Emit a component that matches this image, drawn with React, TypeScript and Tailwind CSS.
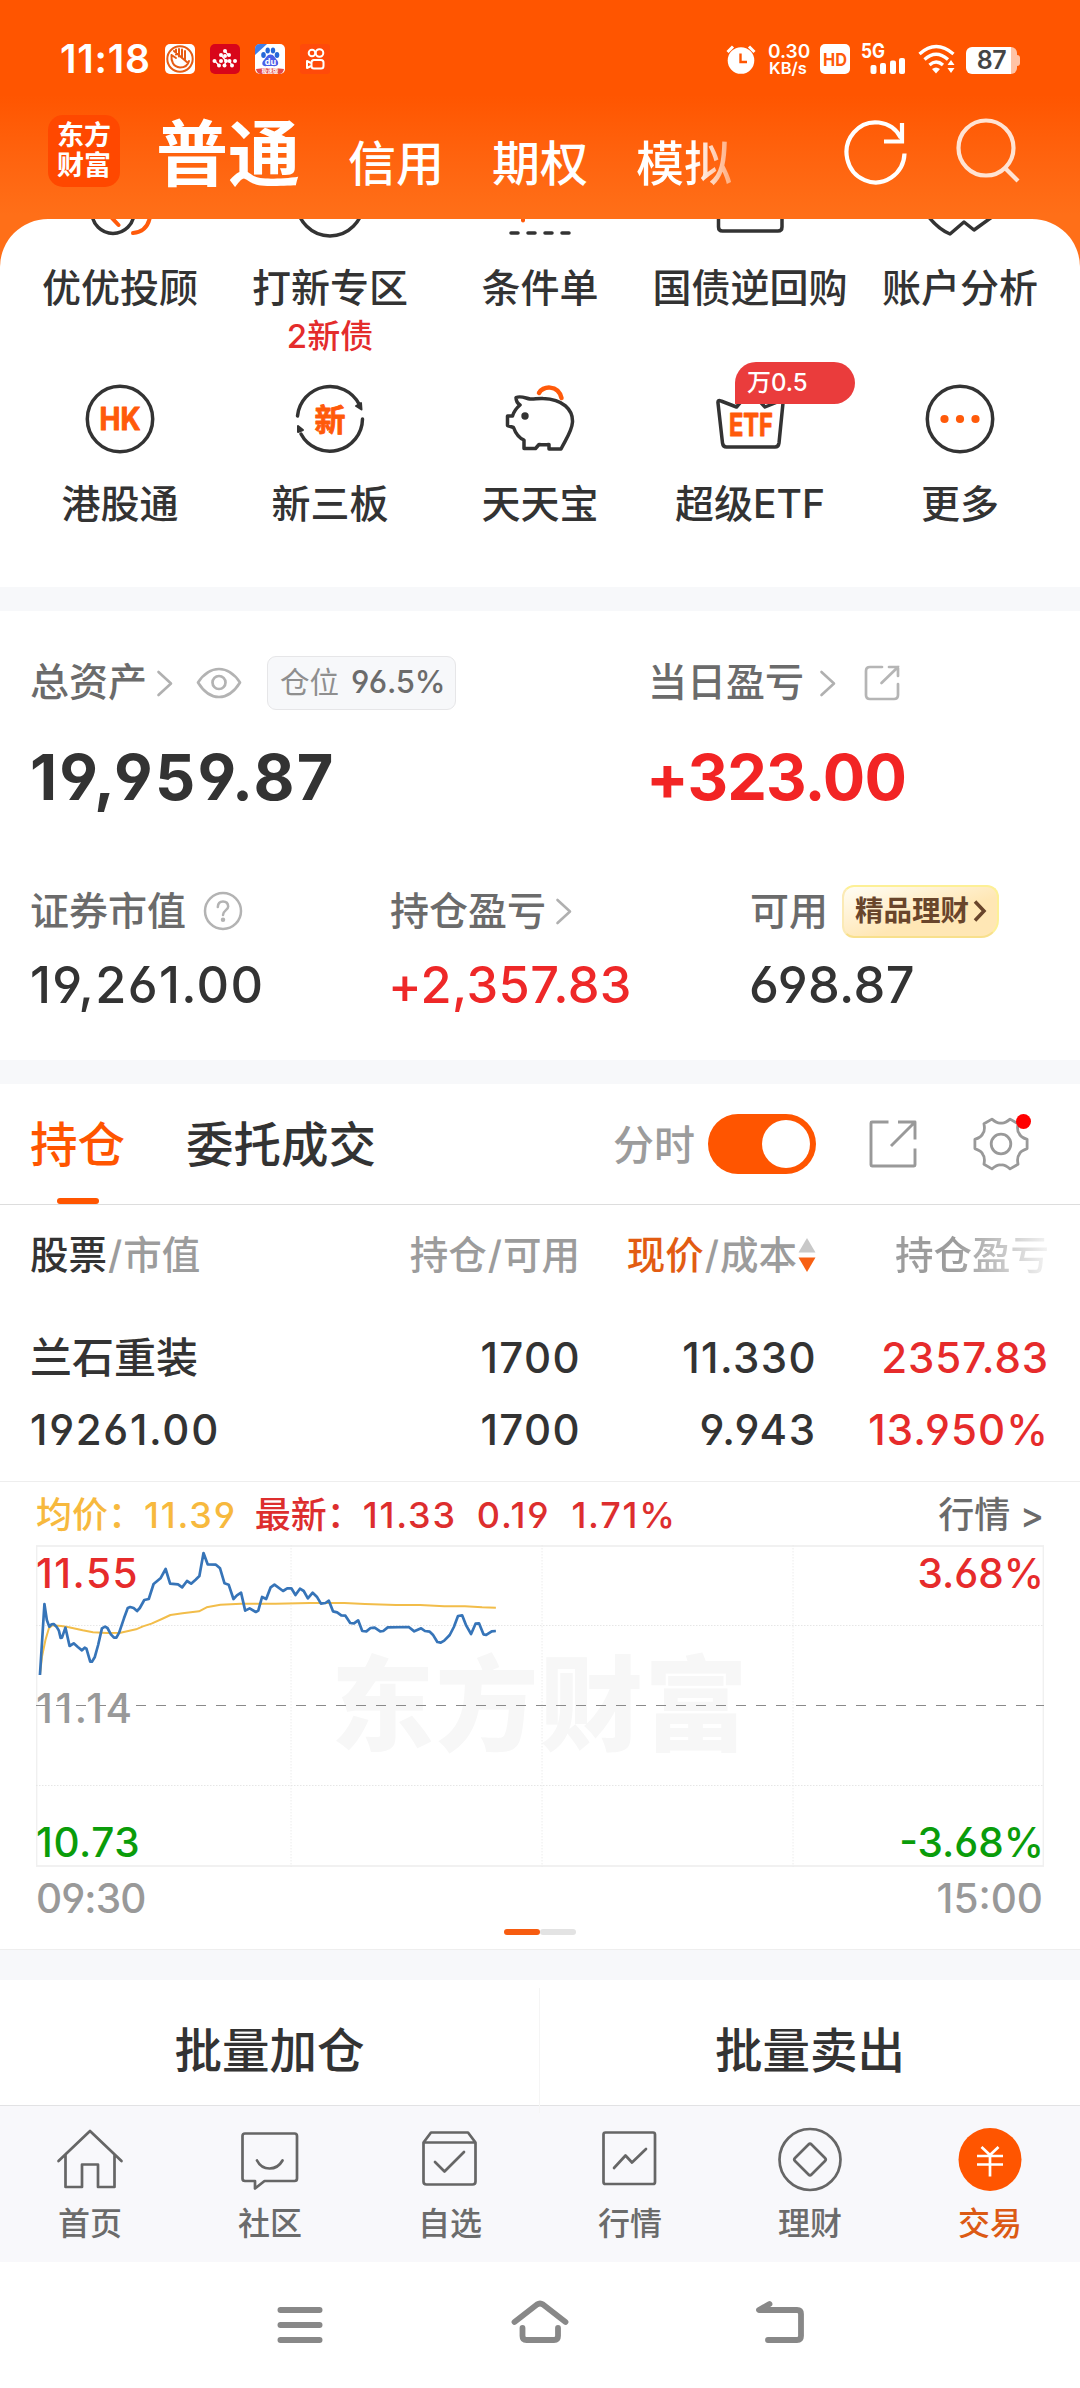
import type { ReactNode } from 'react';

const INK = '#333333';
const ORANGE = '#ff5a0a';

const BLUE_LINE =
  '116,615 129,402 136,450 143,470 150,463 156,462 164,470 171,482 176,504 180,503 190,473 202,528 214,520 226,531 238,541 246,533 251,536 262,575 267,575 275,562 285,525 296,475 305,470 312,474 322,493 331,503 338,503 346,488 360,445 371,414 378,411 388,414 398,423 406,414 419,390 432,387 446,342 466,325 481,297 494,341 517,343 529,352 543,333 555,341 568,329 579,318 591,249 603,283 627,284 639,295 652,340 664,344 678,387 688,376 700,368 712,422 725,415 743,426 750,422 761,381 773,387 786,352 797,344 822,363 834,355 846,355 858,375 871,356 882,363 894,385 908,368 920,380 932,401 945,399 955,392 967,424 979,427 991,436 1003,437 1017,459 1028,460 1040,451 1052,483 1064,484 1076,474 1088,473 1104,484 1113,483 1126,472 1187,471 1203,484 1223,475 1234,483 1248,485 1257,494 1270,516 1280,518 1290,512 1306,495 1318,471 1330,438 1342,436 1354,467 1368,492 1381,461 1391,460 1404,493 1412,495 1428,484 1440,483';
const YELLOW_LINE =
  '116,615 122,560 132,510 142,475 152,466 178,468 200,472 240,481 270,487 310,489 350,488 395,478 415,469 440,461 470,447 495,435 530,430 578,424 600,412 640,404 700,401 800,401 900,399 1000,399 1060,402 1150,405 1220,405 1290,409 1350,409 1400,412 1440,413';

function GridIcon({ children }: { children: ReactNode }) {
  return (
    <svg width="80" height="80" viewBox="0 0 80 80" fill="none" stroke={INK} strokeWidth="3.5" strokeLinecap="round" strokeLinejoin="round">
      {children}
    </svg>
  );
}

function CutIcon({ children }: { children: ReactNode }) {
  return (
    <svg width="80" height="24" viewBox="0 56 80 24" fill="none" stroke={INK} strokeWidth="3.5" strokeLinecap="round" strokeLinejoin="round">
      {children}
    </svg>
  );
}

const TOP_SHORTCUTS = [
  {
    label: '优优投顾',
    note: '',
    icon: (
      <CutIcon>
        <circle cx="33" cy="49.5" r="21" />
        <path d="M31 54 L38.5 62" stroke={ORANGE} strokeWidth="4" />
        <path d="M70 54 Q67 69 53 70" stroke={ORANGE} strokeWidth="4" />
      </CutIcon>
    ),
  },
  { label: '打新专区', note: '2新债', icon: <CutIcon><circle cx="40" cy="40" r="33" /></CutIcon> },
  {
    label: '条件单',
    note: '',
    icon: (
      <CutIcon>
        <path d="M11 70H18 M28 70H35 M45 70H52 M62 70H69" />
        <path d="M23 52V57.5" stroke={ORANGE} strokeWidth="4" />
      </CutIcon>
    ),
  },
  {
    label: '国债逆回购',
    note: '',
    icon: (
      <CutIcon>
        <path d="M8.5 50V64Q8.5 68 12.5 68H68Q72 68 72 64V50" />
      </CutIcon>
    ),
  },
  { label: '账户分析', note: '', icon: <CutIcon><path d="M8 53Q18 66 30 71L44 59L54 67L72 54" /></CutIcon> },
];

const MORE_SHORTCUTS = [
  {
    label: '港股通',
    icon: (
      <GridIcon>
        <circle cx="40" cy="40" r="32.7" />
        <text x="40" y="51" textAnchor="middle" fontSize="31" fontWeight="700" textLength="41" lengthAdjust="spacingAndGlyphs" fill={ORANGE} stroke={ORANGE} strokeWidth="1">HK</text>
      </GridIcon>
    ),
  },
  {
    label: '新三板',
    icon: (
      <GridIcon>
        <path d="M7.5 37A32.7 32.7 0 0 1 69 25" />
        <path d="M72.5 40A32.7 32.7 0 0 1 11 55" />
        <path d="M66 27L71 24L71.500 30.500Z" fill={INK} strokeWidth="2" />
        <path d="M8 47L13 51L8 53Z" fill={INK} strokeWidth="2" />
        <text x="40" y="51.500" textAnchor="middle" fontSize="31" fontWeight="700" fill={ORANGE} stroke={ORANGE} strokeWidth="0.8">新</text>
      </GridIcon>
    ),
  },
  {
    label: '天天宝',
    icon: (
      <GridIcon>
        <path d="M39 14C42 7 58 5 61.500 19" stroke={ORANGE} strokeWidth="4.500" />
        <path d="M16 18.500C21 16.500 25 19 30 20C34 20.500 38 19 43 19.500C63 20 73 31 72.500 43C72 52 66 60 61 70H49V65.500Q44 66 39 65.500L35.500 69.500H24V61C19 59 15.500 54 13.500 48.500L7.500 46.500V37H12.500C14 32 16.500 29 20 26C17 24 16 22 16 18.500Z" fill="#fff" />
        <circle cx="25" cy="37" r="3.700" fill={INK} stroke="none" />
      </GridIcon>
    ),
  },
  {
    label: '超级ETF',
    icon: (
      <GridIcon>
        <path d="M8 24Q7.500 20.500 11 22L26.500 28L40 12L55 28L70 22Q73.500 21 73 24L69 64Q68.500 68 65 68H16.500Q13 68 12.500 64Z" />
        <text x="41" y="56.500" textAnchor="middle" fontSize="31.500" fontWeight="700" textLength="44" lengthAdjust="spacingAndGlyphs" fill={ORANGE} stroke={ORANGE} strokeWidth="1">ETF</text>
      </GridIcon>
    ),
  },
  {
    label: '更多',
    icon: (
      <GridIcon>
        <circle cx="40" cy="40" r="32.700" />
        <g fill={ORANGE} stroke="none">
          <circle cx="24.500" cy="40" r="4.100" />
          <circle cx="40" cy="40" r="4.100" />
          <circle cx="55.500" cy="40" r="4.100" />
        </g>
      </GridIcon>
    ),
  },
];

function Chevron({ className = '' }: { className?: string }) {
  return (
    <svg className={className} width="18" height="28" viewBox="0 0 18 28" fill="none" stroke="#b0b0b0" strokeWidth="2.6" strokeLinecap="round" strokeLinejoin="round">
      <path d="M2.500 3L15 14.500L2.500 26" />
    </svg>
  );
}

function StatusBar() {
  return (
    <div className="flex h-[74px] items-end">
      <div className="ml-[60px] flex h-[30px] w-[105px] items-center text-[39px] font-semibold tracking-[0.8px]">11:18</div>
      <div className="flex gap-[15px]">
        <svg width="30" height="30" viewBox="0 0 30 30" fill="none">
          <rect width="30" height="30" rx="5" fill="#fff" />
          <circle cx="15" cy="15" r="12.700" stroke="#e65c14" strokeWidth="2" />
          <path d="M6.500 11C6 17 8 23 15 23.500C20 23.500 23 21 24 17M6.500 11L11 14M11 5.500V10.500M14 5V12.500M17 5.500V14M20 7V15.500M9 7L23 19" stroke="#e65c14" strokeWidth="2" strokeLinecap="round" />
        </svg>
        <svg width="30" height="30" viewBox="0 0 30 30">
          <rect width="30" height="30" rx="5" fill="#d8061a" />
          <g fill="#fff">
            {[[15, 7], [11, 11], [19, 11], [15, 12], [4.5, 17], [11, 17], [16, 17], [25, 17], [19.5, 17], [9, 21.5], [14.5, 21.5], [22, 21.5]].map(([x, y]) => (
              <circle key={`${x}-${y}`} cx={x} cy={y} r="2" />
            ))}
            <path d="M15 7L19 12M11 11L16 17L14.500 21.500M19.500 17L22 21.500M5 17L9 21.500" fill="none" stroke="#fff" strokeWidth="1.300" />
          </g>
        </svg>
        <svg width="30" height="30" viewBox="0 0 30 30">
          <rect width="30" height="30" rx="5" fill="#fff" />
          <path d="M0 11V5Q0 0 5 0H12Z" fill="#3f7de8" />
          <g fill="#2468d8">
            <ellipse cx="8.500" cy="11" rx="2.300" ry="3" />
            <ellipse cx="12.700" cy="6.500" rx="2.200" ry="3" />
            <ellipse cx="18" cy="6.500" rx="2.200" ry="3" />
            <ellipse cx="22" cy="11" rx="2.300" ry="3" />
          </g>
          <path d="M15.500 10.500C19 10.500 20 14 22 16C25 20 22 23 18 22H12C7 23 6 19 9 16C11 14 12 10.500 15.500 10.500Z" fill="#4a5fe8" />
          <text x="15.400" y="20.500" textAnchor="middle" fontSize="9" fontWeight="700" fill="#fff">du</text>
          <path d="M1 25Q15 23 29 25Q28 30 24 30H6Q2 30 1 25Z" fill="#e34a4a" />
          <text x="15" y="29.300" textAnchor="middle" fontSize="5.500" fontWeight="700" fill="#fff">极速版</text>
        </svg>
        <svg width="30" height="30" viewBox="0 0 30 30" fill="none">
          <rect width="30" height="30" rx="3" fill="#ff4a0a" />
          <g stroke="#fff" strokeWidth="2">
            <circle cx="12" cy="9" r="3.300" />
            <circle cx="19.500" cy="9" r="3.800" />
            <rect x="11.500" y="16" width="12" height="8.500" rx="2.500" />
            <path d="M11 19L7 17V24L11 22" strokeLinejoin="round" />
          </g>
        </svg>
      </div>
      <div className="ml-auto flex items-end">
        <svg width="30" height="30" viewBox="0 0 30 30" fill="none">
          <circle cx="15" cy="16.500" r="13.300" fill="#fff" />
          <path d="M1.500 8L7 2.500M28.500 8L23 2.500" stroke="#fff" strokeWidth="3" />
          <path d="M14.500 9.500V18H21" stroke="#ff5500" strokeWidth="2.400" />
        </svg>
        <div className="ml-3 flex w-10 flex-col text-center text-[19px] font-semibold leading-[15px]">
          <span>0.30</span>
          <span className="mt-[3px] text-[16.5px] leading-[12px]">KB/s</span>
        </div>
        <svg className="ml-3" width="30" height="30" viewBox="0 0 30 30">
          <rect width="30" height="30" rx="5" fill="#fff" />
          <text x="15" y="21.500" textAnchor="middle" fontSize="17.500" fontWeight="700" textLength="24" lengthAdjust="spacingAndGlyphs" fill="#ff5a0a">HD</text>
        </svg>
        <svg className="ml-[11px] overflow-visible" width="46" height="36" viewBox="0 -5 46 36">
          <text x="0" y="15" fontSize="20" fontWeight="700" textLength="24" lengthAdjust="spacingAndGlyphs" fill="#fff">5G</text>
          <g fill="#fff">
            <rect x="9.500" y="22" width="6" height="9" rx="2" />
            <rect x="19" y="20" width="6" height="11" rx="2" />
            <rect x="29" y="17.500" width="6" height="13.500" rx="2" />
            <rect x="38" y="15" width="6" height="16" rx="2" />
          </g>
        </svg>
        <svg className="ml-[11px]" width="38" height="30" viewBox="0 0 38 30" fill="none">
          <g stroke="#fff" strokeWidth="3.300">
            <path d="M1.500 10Q18 -5 35.500 10" />
            <path d="M6.500 15.500Q18 5 30 15.500" />
            <path d="M11.500 21Q18 15 25 21" />
          </g>
          <path d="M14 25Q18 22 22 25L18 29.500Z" fill="#fff" />
          <path d="M33 16L36.500 21H29.500ZM33 29L36.500 24H29.500Z" fill="#fff" />
        </svg>
        <div className="ml-[10px] flex h-[27px] w-[51px] items-center justify-center rounded-[6px] bg-linear-to-r from-white from-88% to-[#ffc3a6] to-88% text-[25px] font-semibold tracking-[-0.5px] text-[#444]">87</div>
        <div className="mb-[8px] mr-[60px] h-[11px] w-[3px] rounded-r-full bg-[#ffc3a6]" />
      </div>
    </div>
  );
}

function Header() {
  return (
    <header className="h-[290px] bg-linear-to-b from-[#ff5500] from-[95px] to-[#ff6f18] to-[215px] text-white">
      <StatusBar />
      <div className="flex h-[145px] items-start">
        <div className="ml-12 mt-[41px] flex h-[72px] w-[72px] flex-col items-center justify-center rounded-[15px] bg-[#ff4800] text-[27px] font-bold leading-[30px]">
          <span>东方</span>
          <span>财富</span>
        </div>
        <nav className="ml-9 flex w-[600px] gap-12 text-[48px] font-medium">
          <span className="mt-[44px] text-[72px] font-bold leading-[72px]">普通</span>
          <span className="mt-[60px] leading-[60px]">信用</span>
          <span className="mt-[60px] leading-[60px]">期权</span>
          <span className="mt-[60px] bg-linear-to-r from-white from-60% to-white/45 bg-clip-text leading-[60px] text-transparent">模拟</span>
        </nav>
        <svg className="ml-[84px] mt-[40px]" width="70" height="72" viewBox="0 0 70 72" fill="none" stroke="#fff" strokeWidth="4.200">
          <path d="M64.500 39.500A29 30 0 1 1 61 24" />
          <path d="M62 9V27.500H44" />
        </svg>
        <svg className="ml-[42px] mt-[40px]" width="70" height="72" viewBox="0 0 70 72" fill="none" stroke="#ffe3d3" strokeWidth="4.200">
          <circle cx="34" cy="34" r="27.500" />
          <path d="M53 54L66 67" />
        </svg>
      </div>
    </header>
  );
}

function Shortcuts() {
  return (
    <section className="relative -mt-[71px] flex h-[368px] flex-col rounded-t-[48px] bg-white px-[15px] text-[39px] font-medium leading-[48px]">
      <div className="grid h-[143px] grid-cols-5">
        {TOP_SHORTCUTS.map((s) => (
          <div key={s.label} className="flex flex-col items-center">
            {s.icon}
            <span className="mt-[21px] whitespace-nowrap text-[#333]">{s.label}</span>
            {s.note && <span className="mt-[6px] text-[33px] leading-[36px] text-[#e42c2c]">{s.note}</span>}
          </div>
        ))}
      </div>
      <div className="mt-[17px] grid grid-cols-5">
        {MORE_SHORTCUTS.map((s) => (
          <div key={s.label} className="relative flex flex-col items-center">
            {s.icon}
            <span className="mt-[21px] whitespace-nowrap text-[#333]">{s.label}</span>
            {s.label === '超级ETF' && (
              <span className="absolute -top-[17px] left-[90px] flex h-[42px] w-[120px] items-center rounded-[21px] rounded-bl-none bg-[#ea3c3c] pl-3 text-[24px] font-medium text-white">万0.5</span>
            )}
          </div>
        ))}
      </div>
    </section>
  );
}

function Assets() {
  return (
    <section className="h-[449px] bg-white px-[30px] pt-[45px] text-[39px] font-medium text-[#6b6b6b]">
      <div className="flex h-[53px]">
        <div className="flex w-[618px] items-center">
          <span>总资产</span>
          <Chevron className="ml-[9px]" />
          <svg className="ml-[22px]" width="46" height="32" viewBox="0 0 46 32" fill="none" stroke="#b3b3b3" strokeWidth="2.700">
            <path d="M2 15.500Q11 2 23 2T44 15.500Q35 30 23 30T2 15.500Z" strokeLinejoin="round" />
            <circle cx="23" cy="15.500" r="6.500" />
          </svg>
          <div className="ml-[25px] flex h-[54px] w-[189px] items-center rounded-[9px] border border-[#e6e6e8] bg-[#f7f8fa] pl-[12px]">
            <span className="text-[29.5px] font-normal text-[#8f8f8f]">仓位</span>
            <span className="ml-[12px] text-[31px] tracking-[-0.2px]">96.5%</span>
          </div>
        </div>
        <div className="flex items-center">
          <span>当日盈亏</span>
          <Chevron className="ml-[15px]" />
          <svg className="ml-[26px]" width="38" height="38" viewBox="0 0 38 38" fill="none" stroke="#b5b5b5" strokeWidth="2.700" strokeLinecap="round">
            <path d="M19 3H7Q3 3 3 7V31Q3 35 7 35H31Q35 35 35 31V20" />
            <path d="M26 3H35V12M35 3L18.500 19" />
          </svg>
        </div>
      </div>
      <div className="mt-[38px] flex h-[60px] items-center text-[63px] font-bold leading-[60px]">
        <span className="w-[616px] tracking-[2.2px] text-[#333]">19,959.87</span>
        <span className="tracking-[-0.9px] text-[#f22424]">+323.00</span>
      </div>
      <div className="mt-[78px] flex h-[52px] items-center">
        <div className="flex w-[360px] items-center">
          <span>证券市值</span>
          <svg className="ml-[17px]" width="40" height="40" viewBox="0 0 40 40" fill="none" stroke="#b3b3b3" strokeWidth="2.500" strokeLinecap="round">
            <circle cx="20" cy="20" r="18" />
            <path d="M14.800 16Q15 10.500 20 10.500T25.200 15.500C25.200 19 20 19.500 20 24" />
            <circle cx="20" cy="28.800" r="1" fill="#b3b3b3" />
          </svg>
        </div>
        <div className="flex w-[360px] items-center">
          <span>持仓盈亏</span>
          <Chevron className="ml-[9px]" />
        </div>
        <span>可用</span>
        <div className="ml-[14px] flex h-[53px] w-[157px] items-center rounded-[12px] rounded-br-[18px] border-2 border-l-[#fbeab5] border-t-[#fdf096] border-r-[#fdf096] border-b-[#f8e08c] bg-linear-to-br from-[#fffdf5] to-[#ffe7b5] to-60% pl-[11px] text-[28.5px] font-bold text-[#69452b]">
          <span>精品理财</span>
          <svg className="ml-[4px]" width="14" height="24" viewBox="0 0 14 24" fill="none" stroke="#69452b" strokeWidth="3.500">
            <path d="M2 2.500L11 12L2 21.500" />
          </svg>
        </div>
      </div>
      <div className="mt-[18px] flex h-[60px] items-center text-[50.5px] text-[#333]">
        <span className="w-[358px] tracking-[1.35px]">19,261.00</span>
        <span className="w-[361px] tracking-[0.4px] text-[#ee2828]">+2,357.83</span>
        <span className="tracking-[0.4px]">698.87</span>
      </div>
    </section>
  );
}

function GearIcon() {
  const at = (deg: number, r: number) => {
    const a = (deg * Math.PI) / 180;
    return `${(30 + r * Math.cos(a)).toFixed(2)} ${(30 + r * Math.sin(a)).toFixed(2)}`;
  };
  const path = [0, 60, 120, 180, 240, 300]
    .map((d) => `${d === 0 ? 'M' : 'L'}${at(d - 10, 26.5)}L${at(d + 10, 26.5)}Q${at(d + 20, 20.5)} ${at(d + 30, 21)}Q${at(d + 40, 20.5)} ${at(d + 50, 26.5)}`)
    .join('');
  return (
    <svg width="60" height="60" viewBox="0 0 60 60" fill="none" stroke="#999" strokeWidth="2.8" strokeLinejoin="round">
      <path d={`${path}Z`} />
      <circle cx="30" cy="30" r="9.8" />
    </svg>
  );
}

function HoldingsTabs() {
  return (
    <div className="flex h-[121px] items-center border-b border-[#ddd] pl-[30px] text-[47.5px] font-medium">
      <div className="relative flex h-full items-center pt-[2px] text-[#ff5500]">
        持仓
        <span className="absolute bottom-0 left-[27px] h-[6px] w-[42px] rounded-full bg-[#ff5500]" />
      </div>
      <span className="ml-[61px] pt-[2px] text-[#333]">委托成交</span>
      <span className="ml-auto pt-[3px] text-[41px] text-[#9c9c9c]">分时</span>
      <div className="ml-[13px] flex h-[60px] w-[108px] items-center justify-end rounded-full bg-[#ff5500] pr-[6px]">
        <div className="h-12 w-12 rounded-full bg-white" />
      </div>
      <svg className="ml-[52px]" width="50" height="50" viewBox="0 0 50 50" fill="none" stroke="#999" strokeWidth="2.900" strokeLinejoin="round">
        <path d="M20.500 3H4Q3 3 3 4V46Q3 47 4 47H46Q47 47 47 46V29.500" />
        <path d="M30 3H47V20.500M47 3L23 27" />
      </svg>
      <div className="relative ml-[53px] mr-[49px]">
        <GearIcon />
        <span className="absolute right-0 top-0 h-[15px] w-[15px] rounded-full bg-[#ff0000]" />
      </div>
    </div>
  );
}

function Slash() {
  return <span className="px-[1px]">/</span>;
}

function HoldingsTable() {
  return (
    <div className="h-[276px] pl-[30px] pr-[31px] pt-[20px]">
      <div className="grid grid-cols-[300px_250px_236px_1fr] text-right text-[38.5px] font-medium leading-[60px] text-[#9c9c9c]">
        <span className="text-left"><span className="text-[#333]">股票</span><Slash />市值</span>
        <span>持仓<Slash />可用</span>
        <span className="flex items-center justify-end">
          <span className="text-[#e25c12]">现价</span><Slash />成本
          <svg className="ml-[1px]" width="18" height="36" viewBox="0 0 18 36">
            <path d="M9 1L17.500 15.500H0.500Z" fill="#c8c8c8" />
            <path d="M9 35L17.500 20.500H0.500Z" fill="#f76013" />
          </svg>
        </span>
        <span className="bg-linear-to-r from-[#9c9c9c] from-60% to-[#f4f4f4] bg-clip-text text-transparent">持仓盈亏</span>
      </div>
      <div className="mt-[43px] grid grid-cols-[300px_251px_236px_1fr] gap-y-3 text-right text-[42px] font-medium leading-[60px] tracking-[1.4px] text-[#333]">
        <span className="text-left tracking-normal">兰石重装</span>
        <span>1700</span>
        <span>11.330</span>
        <span className="tracking-[0.9px] text-[#e62b2b]">2357.83</span>
        <span className="text-left tracking-[1.7px]">19261.00</span>
        <span>1700</span>
        <span className="tracking-[1.8px]">9.943</span>
        <span className="tracking-[1.1px] text-[#e62b2b]">13.950%</span>
      </div>
    </div>
  );
}

function IntradayChart() {
  return (
    <div className="relative h-[468px] border-t border-[#eee] text-[40.5px] font-medium">
      <div className="flex h-[63px] items-center px-9 pt-[2px] text-[36px]">
        <span className="text-[#f7b93e]">均价：</span>
        <span className="tracking-[1.8px] text-[#f7b93e]">11.39</span>
        <span className="ml-[18px] text-[#dd2e2e]">最新：</span>
        <span className="tracking-[1.8px] text-[#dd2e2e]">11.33</span>
        <span className="ml-[20px] tracking-[1.8px] text-[#dd2e2e]">0.19</span>
        <span className="ml-[21px] tracking-[1.8px] text-[#dd2e2e]">1.71%</span>
        <span className="ml-auto text-[#6b6b6b]">行情 &gt;</span>
      </div>
      <div className="relative ml-9 h-[322px] w-[1008px]">
        <div className="absolute inset-0 flex items-center justify-center text-[103px] font-black tracking-[1.5px] text-[#f7f7f7]">东方财富</div>
        <svg className="absolute inset-0" width="1008" height="322" viewBox="0 0 1008 322" fill="none">
          <rect x="0.500" y="1" width="1007" height="320" stroke="#f0f0f0" strokeWidth="1.800" />
          <path d="M255 0V322M506 0V322M757 0V322" stroke="#ececec" strokeDasharray="1.500 1.500" />
          <path d="M0 80.500H1008M0 240.500H1008" stroke="#e6e6e6" strokeDasharray="1.500 1.500" />
          <path d="M0 160.500H1008" stroke="#8a8a8a" strokeDasharray="10 10" />
          <g transform="translate(-36 -75) scale(0.34436 0.33333)" strokeLinejoin="round">
            <polyline points={YELLOW_LINE} stroke="#f2bd4a" strokeWidth="2" vectorEffect="non-scaling-stroke" />
            <polyline points={BLUE_LINE} stroke="#3674b8" strokeWidth="2.700" vectorEffect="non-scaling-stroke" />
          </g>
        </svg>
        <div className="absolute inset-0 flex flex-col justify-between leading-[60px]">
          <div className="-mt-[1px] flex justify-between text-[#e62b2b]"><span className="tracking-[1.5px]">11.55</span><span>3.68%</span></div>
          <div className="tracking-[2.6px] text-[#999]">11.14</div>
          <div className="-mb-[6px] flex justify-between text-[#0a9c0a]"><span className="tracking-[0.6px]">10.73</span><span>-3.68%</span></div>
        </div>
      </div>
      <div className="flex h-[60px] items-center justify-between pl-[36px] pr-[37px] pt-[4px] text-[#999]">
        <span className="tracking-[-0.9px]">09:30</span>
        <span>15:00</span>
      </div>
      <div className="mt-[2px] flex justify-center">
        <div className="h-[6px] w-9 rounded-full bg-[#f75c10]" />
        <div className="h-[6px] w-9 rounded-full bg-[#e3e3e3]" />
      </div>
    </div>
  );
}

const TABS = [
  { label: '首页', icon: <path d="M8.500 42L40 12L71.500 42M15.500 36V68H32V45.500H48V68H64.500V36" /> },
  {
    label: '社区',
    icon: <path d="M15 14.500H64.500Q67 14.500 67 17V59.500Q67 62 64.500 62H34.500L25 69.500V62H15Q12.500 62 12.500 59.500V17Q12.500 14.500 15 14.500ZM27 41.500Q31 49.500 39.500 49.500T52.500 41.500" />,
  },
  { label: '自选', icon: <path d="M13.500 23.500L21 13.500H58L65.500 23.500V62.500Q65.500 65.500 62.500 65.500H16.500Q13.500 65.500 13.500 62.500ZM13.500 23.500H65.500M25 43L34.500 52.500L54 33" /> },
  { label: '行情', icon: <path d="M15.500 13.500H63Q65 13.500 65 15.500V63Q65 65 63 65H15.500Q13.500 65 13.500 63V15.500Q13.500 13.500 15.500 13.500ZM24 49L35.500 36.500L42 43.500L56 30" /> },
  {
    label: '理财',
    icon: (
      <>
        <circle cx="40" cy="40.500" r="30.500" />
        <path d="M38.500 25.500Q40 24 41.500 25.500L55 39Q56.500 40.500 55 42L41.500 55.500Q40 57 38.500 55.500L25 42Q23.500 40.500 25 39Z" />
      </>
    ),
  },
  {
    label: '交易',
    icon: (
      <>
        <circle cx="40" cy="40.500" r="31.500" fill="#ff5500" stroke="none" />
        <path d="M31.500 28L40 36L48.500 28M40 36V57.500M27 37H53M27 45.500H53" stroke="#fff" strokeLinecap="butt" />
      </>
    ),
  },
];

function BottomTabs() {
  return (
    <nav className="grid h-[157px] grid-cols-6 border-t border-[#e2e2e4] bg-[#f8f8fb] pt-[13px]">
      {TABS.map((t) => (
        <div key={t.label} className={t.label === '交易' ? 'flex flex-col items-center text-[#dc5a14]' : 'flex flex-col items-center text-[#6b6b6b]'}>
          <svg width="80" height="80" viewBox="0 0 80 80" fill="none" stroke="#666" strokeWidth="2.700" strokeLinecap="round" strokeLinejoin="round">
            {t.icon}
          </svg>
          <span className="mt-[5px] text-[32px] font-medium leading-[40px]">{t.label}</span>
        </div>
      ))}
    </nav>
  );
}

function SystemNav() {
  return (
    <div className="flex h-[126px] items-center justify-center gap-[160px] bg-white">
      <svg width="80" height="60" viewBox="0 0 80 60" stroke="#888" strokeWidth="6" strokeLinecap="round">
        <path d="M20.500 15H59.500M20.500 30H59.500M20.500 45H59.500" />
      </svg>
      <svg width="80" height="60" viewBox="0 0 80 60" fill="none" stroke="#888" strokeWidth="5.800" strokeLinecap="round" strokeLinejoin="round">
        <path d="M14.500 27L37 9.500Q40 7.500 43 9.500L65.500 27M22.500 33V41Q22.500 45 26.500 45H54Q58 45 58 41V33" />
      </svg>
      <svg width="80" height="60" viewBox="0 0 80 60" fill="none" stroke="#888" strokeWidth="5.800" strokeLinecap="round" strokeLinejoin="round">
        <path d="M29.500 9L19 15H57Q61 15 61 19V41Q61 45 57 45H28" />
      </svg>
    </div>
  );
}

export default function App() {
  return (
    <main className="h-[2388px] w-[1080px] overflow-hidden bg-[#f7f8fa] font-['Inter','Noto_Sans_CJK_SC',sans-serif] [font-feature-settings:'cv03','cv04']">
      <Header />
      <Shortcuts />
      <div className="h-6" />
      <Assets />
      <div className="h-6" />
      <section className="bg-white">
        <HoldingsTabs />
        <HoldingsTable />
        <IntradayChart />
      </section>
      <div className="h-[31px] border-t border-[#eee]" />
      <section className="grid h-[125px] grid-cols-2 bg-white pt-[8px] text-center text-[47.5px] font-medium leading-[125px] text-[#333]">
        <span className="border-r border-[#f5f5f5]">批量加仓</span>
        <span>批量卖出</span>
      </section>
      <BottomTabs />
      <SystemNav />
    </main>
  );
}
